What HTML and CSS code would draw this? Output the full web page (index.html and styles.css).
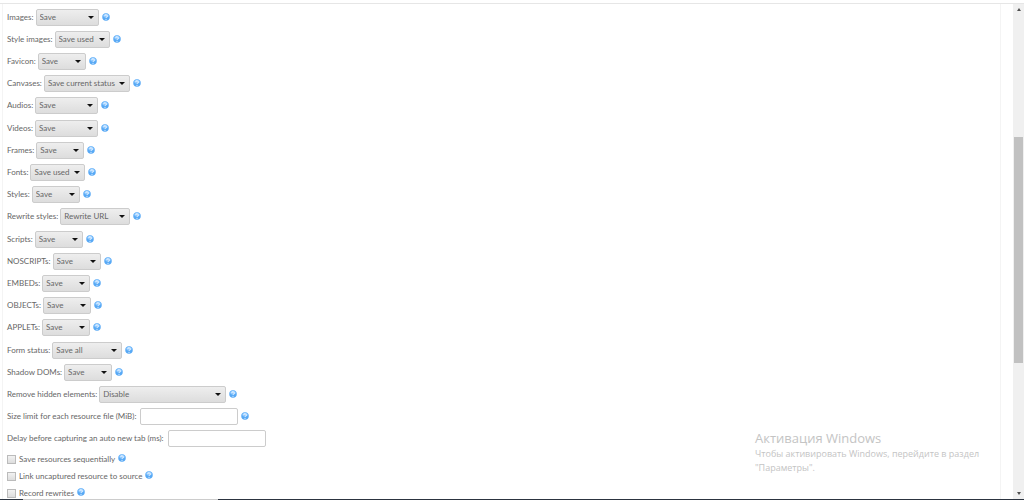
FILE: index.html
```html
<!DOCTYPE html>
<html lang="en">
  <head>
    <meta charset="UTF-8" />
    <meta name="viewport" content="width=device-width, initial-scale=1.0" />
    <title>Options</title>
    <link rel="stylesheet" href="styles.css">
  </head>
  <body>
    <div class="window">
      <form class="panel" id="options"></form>
      <div class="scrollbar">
        <span class="arrow up"></span>
        <div class="track"><div class="thumb"></div></div>
        <span class="arrow down"></span>
      </div>
    </div>
    <div class="taskbar"><div class="taskbar-search"></div></div>

    <div class="watermark">
      <p class="watermark-title">Активация Windows</p>
      <p>Чтобы активировать Windows, перейдите в раздел "Параметры".</p>
    </div>

    <script src="script.js"></script>
  </body>
</html>
```
FILE: styles.css
```css
* {
  box-sizing: border-box;
}
html,
body {
  height: 100%;
  margin: 0;
  padding: 0;
}
body {
  display: flex;
  flex-direction: column;
  overflow: hidden;
  background: #fff;
  color: #666;
  font-family: Lato, "Open Sans", sans-serif;
  font-size: 8px;
}
p {
  margin: 0;
}

.window {
  flex: 1;
  min-height: 0;
  display: flex;
  margin-top: 3px;
  border-top: 1px solid #e6e6e6;
}

/* options */
.panel {
  flex: 1;
  min-width: 0;
  margin: 0 12px 0 2px;
  padding: 5px 4px 0;
  border: solid #f4f4f4;
  border-width: 0 1px;
  overflow: hidden;
}
.option {
  display: flex;
  align-items: center;
  height: 17px;
  margin-bottom: 5px;
}
.option:nth-child(5n) {
  margin-bottom: 6px;
}
.option label {
  padding-bottom: 2px;
  white-space: nowrap;
}
.option select,
.option input {
  height: 17px;
  margin: 0 0 0 2px;
  border: 1px solid #ccc;
  border-radius: 2px;
  color: #666;
  font-family: inherit;
  font-size: 8px;
}
.option select {
  appearance: none;
  width: 48px;
  padding: 0 0 1px 3px;
  background: linear-gradient(#eee, #ddd);
}
.option input {
  width: 98px;
  margin-left: 4px;
  padding: 0 3px;
  background: #fff;
}
.option .w55 {
  width: 55px;
}
.option .w63 {
  width: 63px;
}
.option .w70 {
  width: 70px;
}
.option .w86 {
  width: 86px;
}
.option .w127 {
  width: 127px;
}
.select {
  position: relative;
  display: flex;
}
.select::after {
  content: "";
  position: absolute;
  top: 7px;
  right: 5px;
  border: solid transparent;
  border-width: 3px 3px 0;
  border-top-color: #111;
  pointer-events: none;
}
.help {
  width: 8px;
  height: 8px;
  margin: 0 0 2px 3px;
}

.check {
  display: flex;
  align-items: center;
  height: 12px;
  margin-bottom: 5px;
}
.check input {
  appearance: none;
  width: 9px;
  height: 9px;
  margin: 1px 3px 0 0;
  border: 1px solid #bbb;
  background: linear-gradient(#f2f2f2, #ddd);
}

/* scrollbar */
.scrollbar {
  display: flex;
  flex-direction: column;
  align-items: center;
  width: 11px;
  padding: 4px 0;
  background: #f0f0f0;
}
.track {
  flex: 1;
  display: flex;
  flex-direction: column;
  width: 9px;
}
.thumb {
  height: 47%;
  margin-top: 126px;
  background: #c1c1c1;
}
.arrow {
  border: solid transparent;
}
.up {
  border-width: 0 2px 3px;
  border-bottom-color: #505050;
}
.down {
  border-width: 3px 2px 0;
  border-top-color: #505050;
}

.taskbar {
  height: 1px;
  background: #2c3440;
}
.taskbar-search {
  width: 19%;
  height: 1px;
  margin-left: 23px;
  background: #ccc;
}

.watermark {
  position: absolute;
  right: 29px;
  bottom: 25px;
  width: 240px;
  color: #c4c4c4;
  font-family: "Open Sans", "Noto Sans", sans-serif;
  font-size: 9px;
  line-height: 14px;
}
.watermark-title {
  font-size: 13px;
  line-height: 18px;
}
```
FILE: script.js
```js
var options = [
  { name: "Images", value: "Save", size: "w63" },
  { name: "Style images", value: "Save used", size: "w55" },
  { name: "Favicon", value: "Save" },
  { name: "Canvases", value: "Save current status", size: "w86" },
  { name: "Audios", value: "Save", size: "w63" },
  { name: "Videos", value: "Save", size: "w63" },
  { name: "Frames", value: "Save" },
  { name: "Fonts", value: "Save used", size: "w55" },
  { name: "Styles", value: "Save" },
  { name: "Rewrite styles", value: "Rewrite URL", size: "w70" },
  { name: "Scripts", value: "Save" },
  { name: "NOSCRIPTs", value: "Save" },
  { name: "EMBEDs", value: "Save" },
  { name: "OBJECTs", value: "Save" },
  { name: "APPLETs", value: "Save" },
  { name: "Form status", value: "Save all", size: "w70" },
  { name: "Shadow DOMs", value: "Save" },
  { name: "Remove hidden elements", value: "Disable", size: "w127" },
  { name: "Size limit for each resource file (MiB)", type: "text" },
  { name: "Delay before capturing an auto new tab (ms)", type: "text", noHelp: true },
  { name: "Save resources sequentially", type: "checkbox" },
  { name: "Link uncaptured resource to source", type: "checkbox" },
  { name: "Record rewrites", type: "checkbox" }
];

var help =
  '<svg class="help" viewBox="0 0 16 16">' +
  '<circle cx="8" cy="8" r="7.5" fill="#58a9f5"/>' +
  '<ellipse cx="8" cy="5" rx="5.5" ry="4" fill="#8cc8ff"/>' +
  '<path d="M5.5 6.2a2.5 2.5 0 1 1 3.7 2.1Q8 9 8 10" fill="none" stroke="#fff" stroke-width="2"/>' +
  '<circle cx="8" cy="12.5" r="1.2" fill="#fff"/></svg>';

var html = "";
options.forEach(function (o, i) {
  var id = "opt_" + i;
  var icon = o.noHelp ? "" : help;
  if (o.type == "checkbox") {
    html += '<div class="check"><input type="checkbox" id="' + id + '">' +
      '<label for="' + id + '">' + o.name + "</label>" + icon + "</div>";
    return;
  }
  var field = o.type == "text"
    ? '<input type="text" id="' + id + '">'
    : '<span class="select"><select id="' + id + '" class="' + (o.size || "") + '"><option>' +
      o.value + "</option></select></span>";
  html += '<div class="option"><label for="' + id + '">' + o.name + ":</label>" + field + icon + "</div>";
});
document.getElementById("options").innerHTML = html;
```
